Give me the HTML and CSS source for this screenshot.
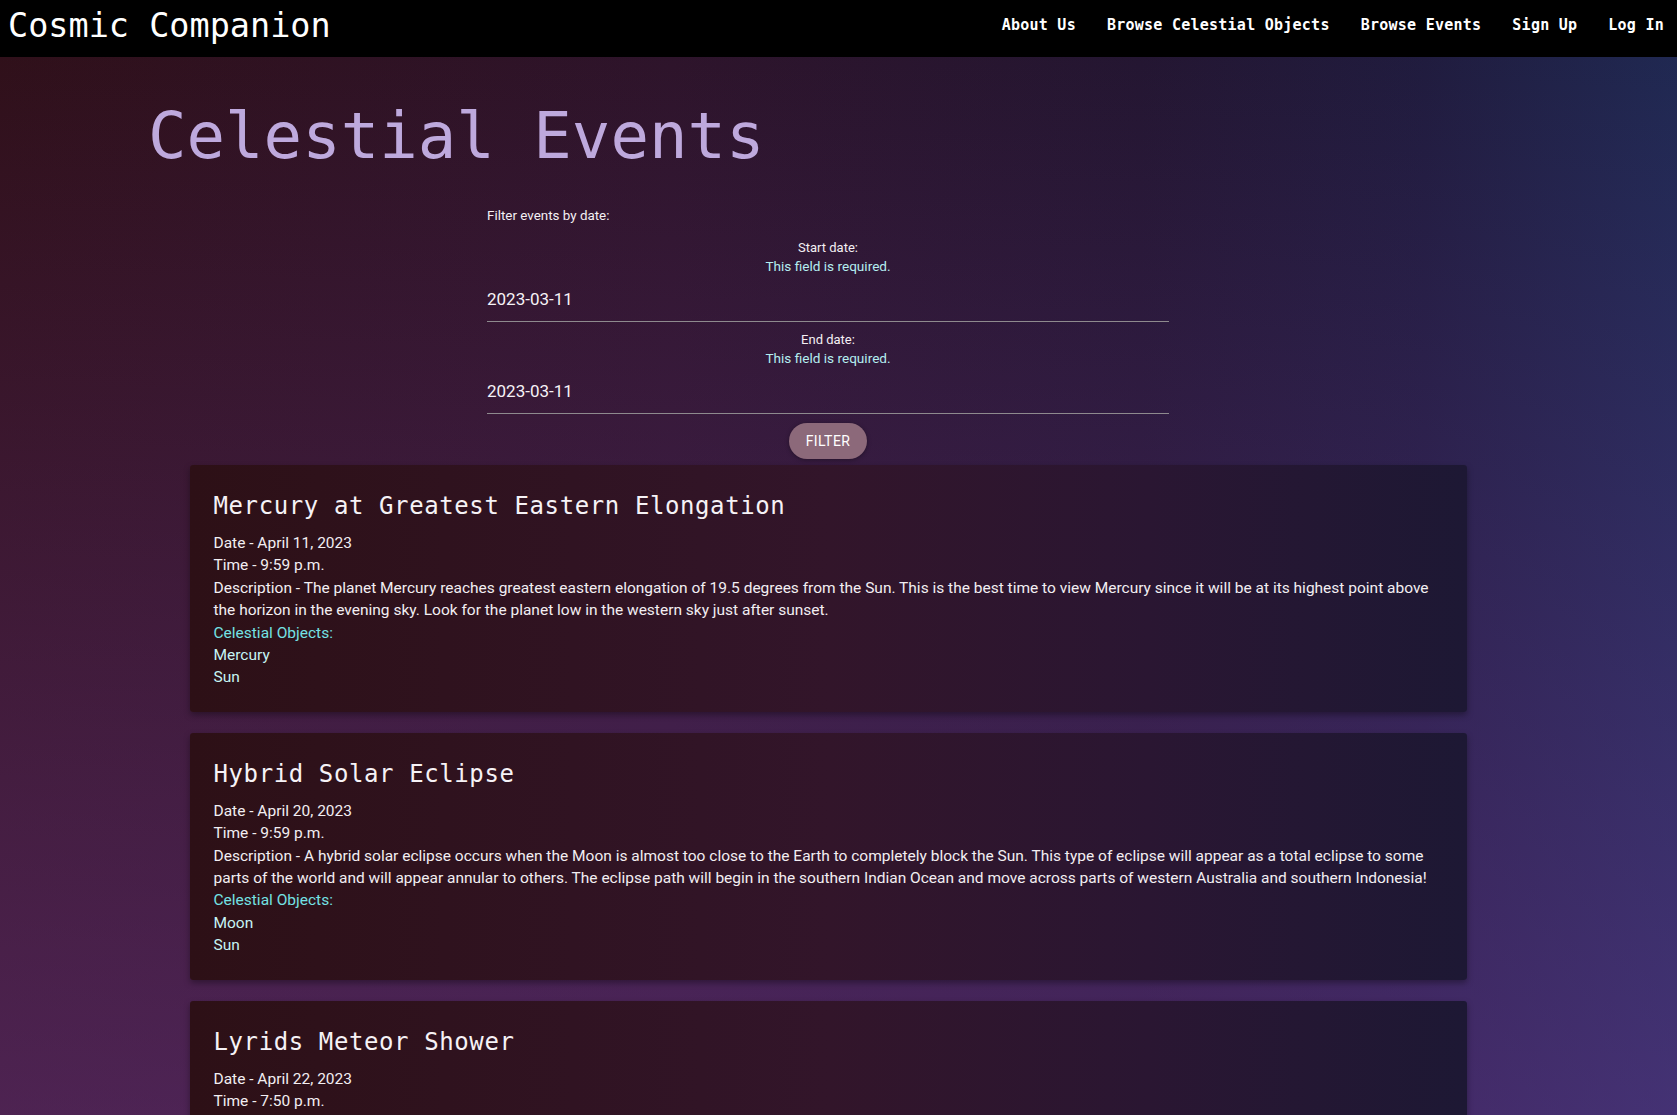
FILE: index.html
```html
<!DOCTYPE html>
<html lang="en">
<head>
<meta charset="utf-8">
<title>Celestial Events - Cosmic Companion</title>
<link rel="stylesheet" href="styles.css">
</head>
<body>
<header class="topbar">
  <a class="brand" href="#">Cosmic Companion</a>
  <nav class="nav">
    <a href="#">About Us</a>
    <a href="#">Browse Celestial Objects</a>
    <a href="#">Browse Events</a>
    <a href="#">Sign Up</a>
    <a href="#">Log In</a>
  </nav>
</header>
<main class="page">
  <h1 class="page-title">Celestial Events</h1>
  <form class="filter">
    <p class="filter-title">Filter events by date:</p>
    <div class="field">
      <label class="field-label">Start date:</label>
      <span class="field-error">This field is required.</span>
      <div class="field-input">2023-03-11</div>
    </div>
    <div class="field">
      <label class="field-label">End date:</label>
      <span class="field-error">This field is required.</span>
      <div class="field-input">2023-03-11</div>
    </div>
    <div class="filter-actions">
      <button type="button" class="btn">Filter</button>
    </div>
  </form>
  <section class="events">
    <article class="card">
      <h2 class="card-title">Mercury at Greatest Eastern Elongation</h2>
      <p class="line">Date - April 11, 2023</p>
      <p class="line">Time - 9:59 p.m.</p>
      <p class="line">Description - The planet Mercury reaches greatest eastern elongation of 19.5 degrees from the Sun. This is the best time to view Mercury since it will be at its highest point above the horizon in the evening sky. Look for the planet low in the western sky just after sunset.</p>
      <p class="line objects-label">Celestial Objects:</p>
      <p class="line object">Mercury</p>
      <p class="line object">Sun</p>
    </article>
    <article class="card">
      <h2 class="card-title">Hybrid Solar Eclipse</h2>
      <p class="line">Date - April 20, 2023</p>
      <p class="line">Time - 9:59 p.m.</p>
      <p class="line">Description - A hybrid solar eclipse occurs when the Moon is almost too close to the Earth to completely block the Sun. This type of eclipse will appear as a total eclipse to some parts of the world and will appear annular to others. The eclipse path will begin in the southern Indian Ocean and move across parts of western Australia and southern Indonesia!</p>
      <p class="line objects-label">Celestial Objects:</p>
      <p class="line object">Moon</p>
      <p class="line object">Sun</p>
    </article>
    <article class="card">
      <h2 class="card-title">Lyrids Meteor Shower</h2>
      <p class="line">Date - April 22, 2023</p>
      <p class="line">Time - 7:50 p.m.</p>
      <p class="line">Description - The Lyrids is an average shower, usually producing about 20 meteors per hour at its peak. It is produced by dust particles left behind by comet C/1861 G1 Thatcher. Best viewing will be from a dark location after midnight.</p>
      <p class="line objects-label">Celestial Objects:</p>
      <p class="line object">Lyra</p>
    </article>
  </section>
</main>
</body>
</html>
```

FILE: styles.css
```css
html, body {
  margin: 0;
  padding: 0;
}

body {
  min-height: 100vh;
  font-family: Roboto, "Liberation Sans", Arial, sans-serif;
  color: #f2eef2;
  background:
    linear-gradient(to bottom, rgba(125, 65, 170, 0) 0%, rgba(125, 65, 170, 0.4) 100%),
    linear-gradient(to right, #2e0f17 0%, #2c1328 40%, #22152f 68%, #1e1b3c 85%, #1e2850 100%);
  background-attachment: fixed;
}

a {
  color: inherit;
  text-decoration: none;
}

.topbar {
  height: 57px;
  background: #000;
  display: flex;
  align-items: center;
  justify-content: space-between;
  padding: 0 13px 0 8px;
  box-sizing: border-box;
  font-family: "DejaVu Sans Mono", "Liberation Mono", monospace;
  color: #fff;
}

.brand {
  font-size: 33.5px;
  line-height: 1;
  margin-top: -6px;
}

.nav {
  display: flex;
  gap: 31px;
  font-size: 15px;
  letter-spacing: 0.25px;
  font-weight: bold;
  margin-top: -8px;
}

.page {
  padding: 0 21px 40px 0;
}

.page-title {
  margin: 47px 0 0 148px;
  font-family: "DejaVu Sans Mono", "Liberation Mono", monospace;
  font-weight: normal;
  font-size: 64px;
  line-height: 64px;
  color: #bea9dd;
}

.filter {
  width: 682px;
  margin: 39px auto 0;
}

.filter-title {
  margin: 0;
  font-size: 13.4px;
  line-height: 18px;
  color: #f4f0f4;
}

.field {
  display: flex;
  flex-direction: column;
  align-items: center;
  margin-top: 8px;
}

.filter-title + .field {
  margin-top: 13px;
}

.field-label {
  font-size: 13px;
  line-height: 19px;
  color: #f4f0f4;
}

.field-error {
  font-size: 13.6px;
  line-height: 19px;
  color: #b4eef0;
}

.field-input {
  align-self: stretch;
  padding: 12px 0 11px;
  font-size: 17px;
  line-height: 22px;
  color: #f6f2f6;
  border-bottom: 1px solid #8e8a8e;
}

.filter-actions {
  display: flex;
  justify-content: center;
  margin-top: 9px;
}

.btn {
  width: 78px;
  height: 36px;
  border: none;
  border-radius: 18px;
  background: #8c697a;
  color: #fff;
  font-family: Roboto, "Liberation Sans", Arial, sans-serif;
  font-size: 14px;
  font-weight: 400;
  letter-spacing: 0.4px;
  text-transform: uppercase;
  box-shadow: 0 1px 4px rgba(0, 0, 0, 0.35);
}

.events {
  width: 1277px;
  margin: 6px auto 0;
  display: flex;
  flex-direction: column;
  gap: 21px;
}

.card {
  padding: 26px 24px 23px;
  border-radius: 3px;
  background: linear-gradient(to right, #2d1016 0%, #32152a 50%, #2a1632 75%, #1d1834 100%);
  box-shadow: 0 3px 6px rgba(0, 0, 0, 0.35);
}

.card-title {
  margin: 0 0 11px;
  font-family: "DejaVu Sans Mono", "Liberation Mono", monospace;
  font-weight: normal;
  font-size: 24px;
  line-height: 30px;
  letter-spacing: 0.6px;
  color: #f6f2f6;
}

.line {
  margin: 0;
  font-size: 15.5px;
  line-height: 22.4px;
  color: #f2eef2;
}

.objects-label {
  color: #74e2e4;
}

.object {
  color: #c6f4f4;
}
```
